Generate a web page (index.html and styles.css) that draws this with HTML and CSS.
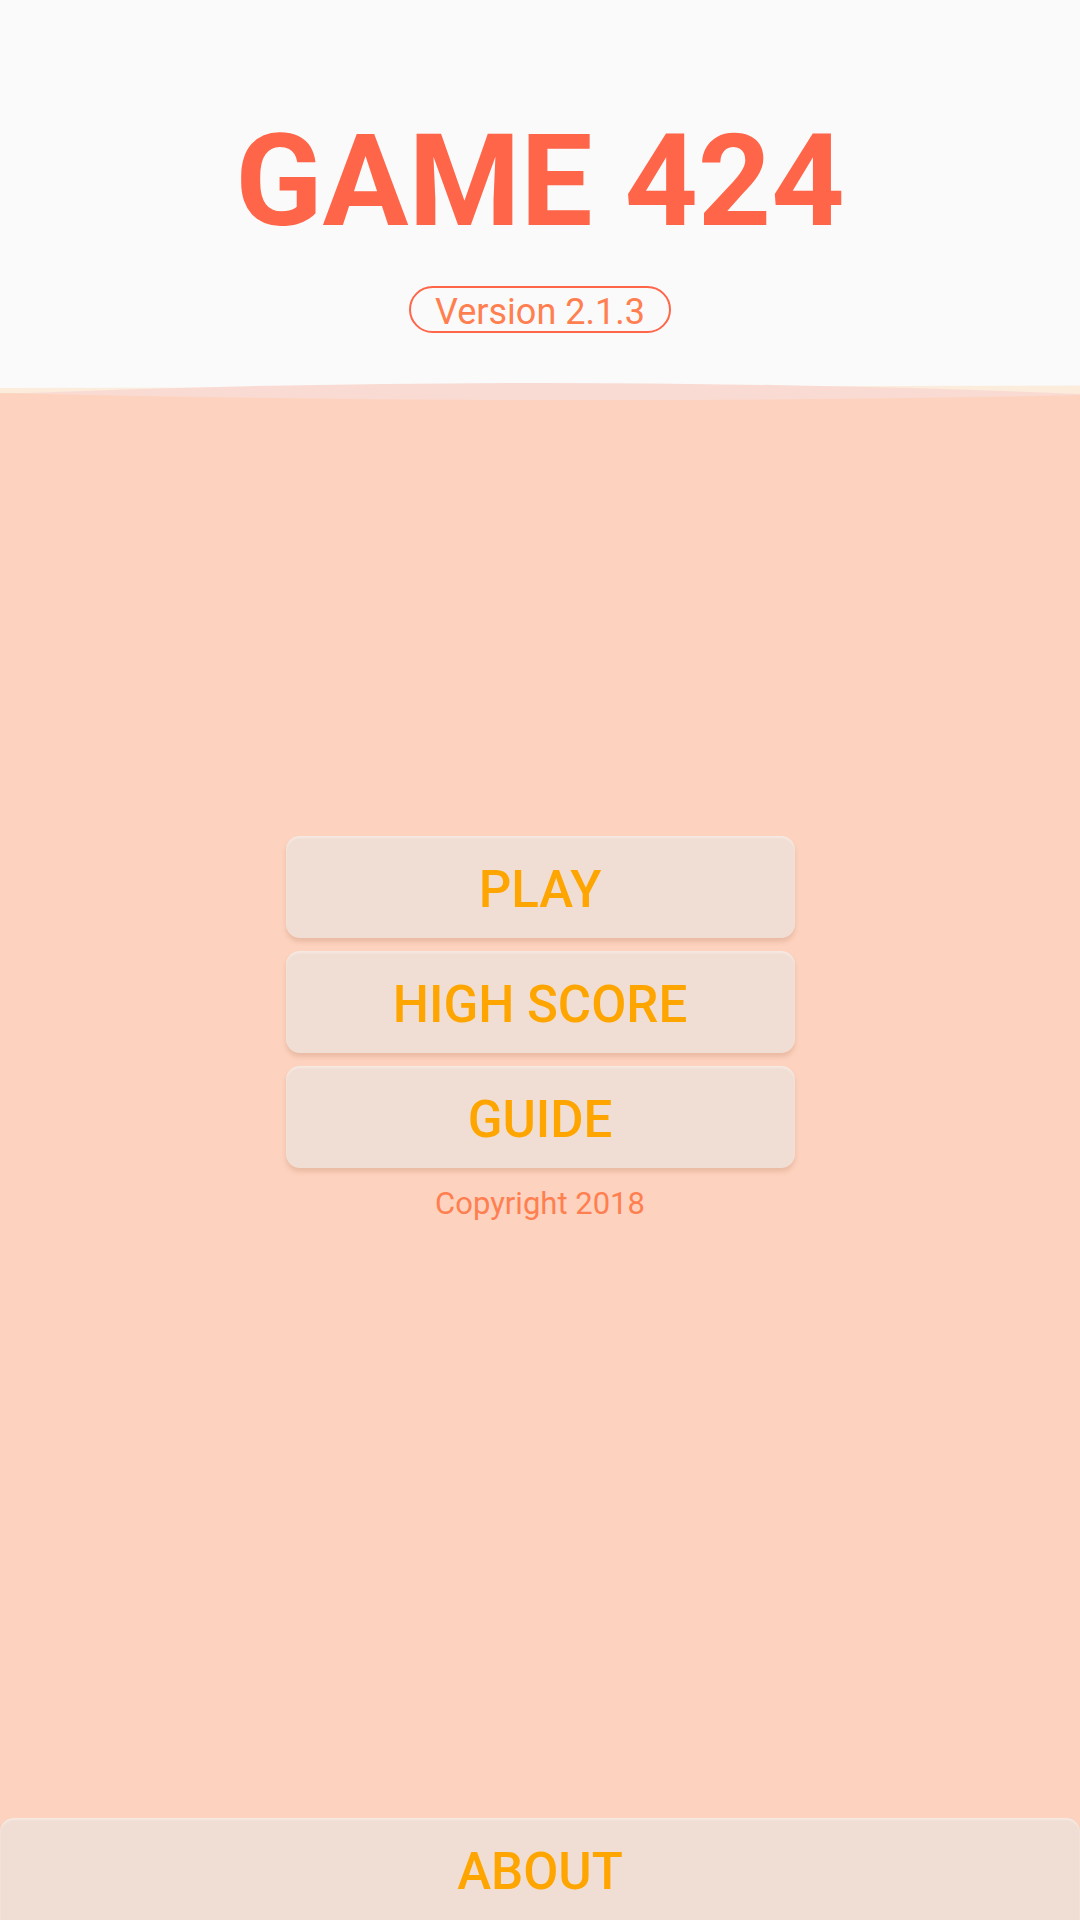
FILE: index.html
```html
<!DOCTYPE html>
<html>
<head>
<meta charset="utf-8">
<link rel="stylesheet" href="styles.css">
</head>
<body>
<div class="page">
  <header class="header">
    <h1 class="title">GAME 424</h1>
    <div class="version">Version 2.1.3</div>
  </header>
  <svg class="wave" width="1080" height="24" viewBox="0 0 1080 24" preserveAspectRatio="none">
    <rect x="0" y="0" width="1080" height="24" fill="#FAFAFA"/>
    <path d="M0,8 L1080,5.5 L1080,24 L0,24 Z" fill="#FBECDB"/>
    <path d="M0,14 Q540,-8 1080,14 L1080,24 L0,24 Z" fill="#F9DBD4"/>
    <path d="M0,13 Q540,26 1080,15 L1080,24 L0,24 Z" fill="#FDD3BF"/>
  </svg>
  <main class="main">
    <div class="menu">
      <button class="btn">PLAY</button>
      <button class="btn">HIGH SCORE</button>
      <button class="btn">GUIDE</button>
    </div>
    <p class="copyright">Copyright 2018</p>
  </main>
  <button class="btn btn-about">ABOUT</button>
</div>
</body>
</html>
```

FILE: styles.css
```css
* { box-sizing: border-box; }
html, body {
  margin: 0;
  padding: 0;
  width: 1080px;
  height: 1920px;
  overflow: hidden;
  background: #FDD3BF;
  font-family: Roboto, "Noto Sans", "Liberation Sans", sans-serif;
}
.page {
  display: flex;
  flex-direction: column;
  width: 1080px;
  height: 1920px;
}
.header {
  height: 380px;
  background: #FAFAFA;
  display: flex;
  flex-direction: column;
  align-items: center;
  padding-top: 117px;
}
.title {
  margin: 0;
  font-size: 128px;
  line-height: 128px;
  font-weight: 700;
  color: #FF6549;
  letter-spacing: 0;
}
.version {
  margin-top: 41px;
  width: 262px;
  height: 47px;
  border: 2.5px solid #FF6549;
  border-radius: 24px;
  padding-top: 6px;
  text-align: center;
  font-size: 36px;
  line-height: 36px;
  color: #FF7F50;
}
.wave {
  display: block;
  flex: none;
}
.main {
  flex: 1;
  display: flex;
  flex-direction: column;
  align-items: center;
  padding-top: 432px;
}
.menu {
  display: flex;
  flex-direction: column;
  gap: 13px;
}
.btn {
  width: 509px;
  height: 102px;
  padding: 5px 0 0;
  border: none;
  border-radius: 14px;
  background: #F0DED4;
  color: #FFA500;
  font-family: Roboto, "Noto Sans", "Liberation Sans", sans-serif;
  font-size: 51px;
  font-weight: 500;
  line-height: 51px;
  box-shadow: inset 0 2px 2px rgba(255, 255, 255, 0.35), 0 4px 5px rgba(170, 100, 70, 0.22);
  display: flex;
  align-items: center;
  justify-content: center;
}
.copyright {
  margin: 18px 0 0;
  font-size: 31px;
  line-height: 36px;
  color: #FF7F50;
}
.btn-about {
  width: 1080px;
  flex: none;
  border-radius: 14px 14px 0 0;
}
```
